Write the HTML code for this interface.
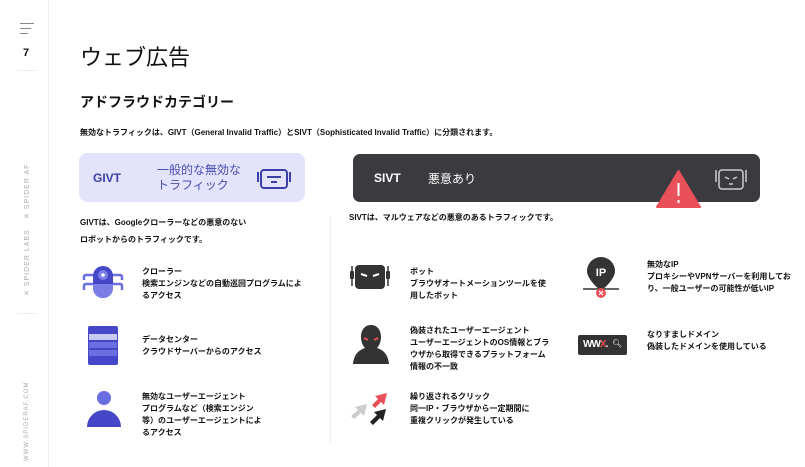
<!DOCTYPE html>
<html><head><meta charset="utf-8"><style>
*{margin:0;padding:0;box-sizing:border-box}
body{width:805px;height:467px;background:#fff;position:relative;overflow:hidden;font-family:"Liberation Sans","Noto Sans CJK JP",sans-serif;color:#111}
.a{position:absolute}
.t{font-size:8px;font-weight:bold;line-height:12px;white-space:nowrap}
.rot{transform:rotate(-90deg);transform-origin:center;font-size:7px;color:#aaa;letter-spacing:1px;white-space:nowrap}
</style></head><body>
<div class="a" style="left:48px;top:0;width:1px;height:467px;background:#eee"></div>
<div class="a" style="left:20px;top:23px;width:14px;height:1px;background:#888"></div>
<div class="a" style="left:20px;top:28px;width:11px;height:1px;background:#888"></div>
<div class="a" style="left:20px;top:33px;width:8px;height:1px;background:#888"></div>
<div class="a" style="left:23px;top:47px;font-size:11px;font-weight:bold">7</div>
<div class="a" style="left:17px;top:70px;width:20px;height:1px;background:#eee"></div>
<div class="a rot" style="left:-3px;top:185px;width:60px">✕ SPIDER AF</div>
<div class="a rot" style="left:-8px;top:257px;width:70px">✕ SPIDER LABS</div>
<div class="a" style="left:17px;top:313px;width:20px;height:1px;background:#eee"></div>
<div class="a rot" style="left:-23px;top:408px;width:100px;font-size:6px">WWW.SPIDERAF.COM</div>

<div class="a" style="left:80px;top:40px;font-size:22px;font-weight:normal">ウェブ広告</div>
<div class="a" style="left:80px;top:92px;font-size:14px;font-weight:bold">アドフラウドカテゴリー</div>
<div class="a t" style="left:80px;top:127px">無効なトラフィックは、GIVT（General Invalid Traffic）とSIVT（Sophisticated Invalid Traffic）に分類されます。</div>

<div class="a" style="left:79px;top:153px;width:226px;height:49px;background:#e3e4fb;border-radius:8px"></div>
<div class="a" style="left:93px;top:171px;font-size:12px;font-weight:bold;color:#3c3fa8">GIVT</div>
<div class="a" style="left:157px;top:163px;font-size:12px;color:#4a4db0;line-height:15px">一般的な無効な<br>トラフィック</div>
<svg class="a" style="left:257px;top:167px" width="34" height="24" viewBox="0 0 34 24"><rect x="4" y="3" width="26" height="18" rx="3" fill="none" stroke="#3c3fa8" stroke-width="2"/><path d="M1 5v10M33 5v10M10 10h14M14 15h6" stroke="#3c3fa8" stroke-width="2"/></svg>

<div class="a" style="left:353px;top:154px;width:407px;height:48px;background:#3b3b3f;border-radius:7px"></div>
<div class="a" style="left:374px;top:171px;font-size:12px;font-weight:bold;color:#fff">SIVT</div>
<div class="a" style="left:428px;top:170px;font-size:12px;color:#fff">悪意あり</div>
<svg class="a" style="left:714px;top:167px" width="34" height="26" viewBox="0 0 34 26"><rect x="5" y="3" width="24" height="19" rx="3" fill="none" stroke="#ccc" stroke-width="1.5"/><path d="M2 3v12M32 3v12M11 10l4 2M23 10l-4 2M15 17h4" stroke="#ccc" stroke-width="1.5"/></svg>
<svg class="a" style="left:656px;top:170px" width="45" height="38" viewBox="0 0 45 38"><path d="M22.5 1L44 37H1z" fill="#e9505a" stroke="#e9505a" stroke-linejoin="round" stroke-width="2"/><path d="M22.5 13v13M22.5 30v3" stroke="#fff" stroke-width="2"/></svg>

<div class="a t" style="left:80px;top:214px;line-height:17px">GIVTは、Googleクローラーなどの悪意のない<br>ロボットからのトラフィックです。</div>
<div class="a t" style="left:349px;top:212px">SIVTは、マルウェアなどの悪意のあるトラフィックです。</div>
<div class="a" style="left:330px;top:215px;width:1px;height:228px;background:#eee"></div>

<svg class="a" style="left:80px;top:264px" width="46" height="36" viewBox="0 0 46 36"><path d="M14 11H6q-2 0-2 2v3M14 20H6q-2 0-2 2v4M32 11h8q2 0 2 2v3M32 20h8q2 0 2 2v4" stroke="#6a6ee0" stroke-width="2.5" fill="none"/><rect x="13" y="2" width="20" height="32" rx="10" fill="#4547c8"/><path d="M13 20h20v4a10 10 0 0 1-20 0z" fill="#7a7ee6"/><circle cx="23" cy="11" r="5" fill="#7a7ee6"/><circle cx="23" cy="11" r="1.8" fill="#fff"/></svg>
<div class="a t" style="left:142px;top:266px">クローラー<br>検索エンジンなどの自動巡回プログラムによ<br>るアクセス</div>
<svg class="a" style="left:88px;top:326px" width="30" height="39" viewBox="0 0 30 39"><rect width="30" height="39" rx="2" fill="#4547c8"/><rect x="1" y="8" width="28" height="6" fill="#c8caf6"/><rect x="1" y="16" width="28" height="6" fill="#6a6ee0"/><rect x="1" y="24" width="28" height="6" fill="#6a6ee0"/></svg>
<div class="a t" style="left:142px;top:334px">データセンター<br>クラウドサーバーからのアクセス</div>
<svg class="a" style="left:87px;top:390px" width="34" height="37" viewBox="0 0 34 37"><circle cx="17" cy="8" r="7" fill="#6a6ee0"/><path d="M0 37a17 17 0 0 1 34 0z" fill="#4547c8"/></svg>
<div class="a t" style="left:142px;top:391px">無効なユーザーエージェント<br>プログラムなど（検索エンジン<br>等）のユーザーエージェントによ<br>るアクセス</div>

<svg class="a" style="left:349px;top:263px" width="42" height="28" viewBox="0 0 42 28"><rect x="6" y="2" width="30" height="24" rx="4" fill="#333"/><path d="M3 3v20M39 3v20" stroke="#333" stroke-width="1.5"/><rect x="1" y="8" width="4" height="8" rx="1" fill="#333"/><rect x="37" y="8" width="4" height="8" rx="1" fill="#333"/><path d="M12 11l6 2M30 11l-6 2" stroke="#fff" stroke-width="2"/></svg>
<div class="a t" style="left:410px;top:266px">ボット<br>ブラウザオートメーションツールを使<br>用したボット</div>
<svg class="a" style="left:583px;top:256px" width="36" height="44" viewBox="0 0 36 44"><path d="M0 33h36" stroke="#333" stroke-width="1.5"/><path d="M18 1a14 14 0 0 1 14 14c0 9-14 20-14 20S4 24 4 15A14 14 0 0 1 18 1z" fill="#333"/><text x="18" y="20" font-size="11" font-weight="bold" fill="#fff" text-anchor="middle" font-family="Liberation Sans">IP</text><circle cx="18" cy="37" r="5" fill="#e9505a"/><path d="M16 35l4 4M20 35l-4 4" stroke="#fff" stroke-width="1.2"/></svg>
<div class="a t" style="left:647px;top:259px">無効なIP<br>プロキシーやVPNサーバーを利用してお<br>り、一般ユーザーの可能性が低いIP</div>
<svg class="a" style="left:353px;top:324px" width="36" height="40" viewBox="0 0 36 40"><path d="M18 1c7 0 10 6 10 12 0 5-2 9-4 11 6 2 11 6 12 16H0c1-10 6-14 12-16-2-2-4-6-4-11C8 7 11 1 18 1z" fill="#333"/><path d="M11 14l4 2M25 14l-4 2" stroke="#e9505a" stroke-width="2"/></svg>
<div class="a t" style="left:410px;top:325px">偽装されたユーザーエージェント<br>ユーザーエージェントのOS情報とブラ<br>ウザから取得できるプラットフォーム<br>情報の不一致</div>
<div class="a" style="left:578px;top:335px;width:49px;height:20px;background:#333;border-radius:2px"></div>
<div class="a" style="left:583px;top:339px;font-size:10px;font-weight:bold;color:#fff;letter-spacing:-1px">WW<span style="color:#e9505a">X</span>.</div>
<div class="a" style="left:612px;top:339px;font-size:8px;color:#fff">🔍︎</div>
<div class="a t" style="left:647px;top:329px">なりすましドメイン<br>偽装したドメインを使用している</div>
<svg class="a" style="left:349px;top:392px" width="40" height="37" viewBox="0 0 40 37"><path d="M38 1l-12 3 3 3-6 6 3 3 6-6 3 3z" fill="#e9505a"/><path d="M18 12l-12 3 3 3-7 6 3 3 7-6 3 3z" fill="#ccc"/><path d="M37 17l-12 3 3 3-7 7 3 3 7-7 3 3z" fill="#222"/></svg>
<div class="a t" style="left:410px;top:391px">繰り返されるクリック<br>同一IP・ブラウザから一定期間に<br>重複クリックが発生している</div>
</body></html>
